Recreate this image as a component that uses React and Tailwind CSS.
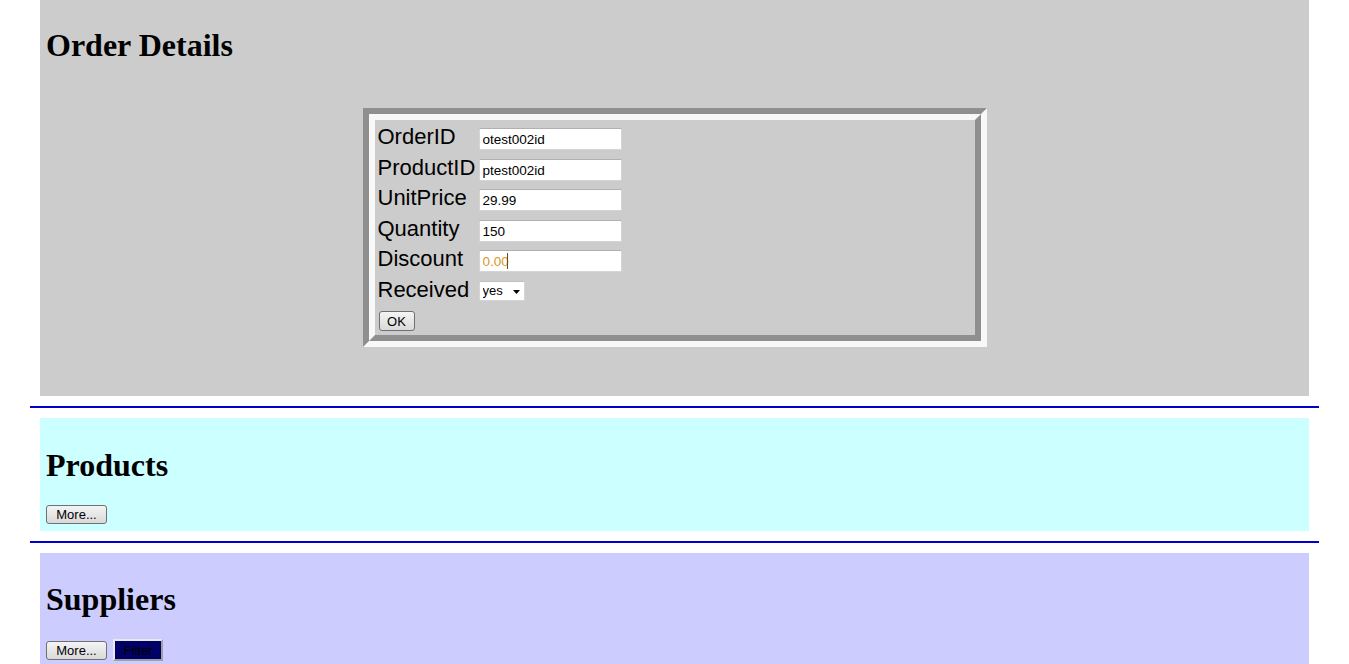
import React from "react";

const heading = "m-0 text-[32px] leading-[37px] font-bold text-black font-['Liberation_Serif',serif]";
const btn =
    "h-[19px] px-[7px] text-[13px] leading-[17px] text-black font-['Liberation_Sans',sans-serif] border border-[#707070] rounded-[3px] bg-gradient-to-b from-[#f4f4f4] to-[#d9d9d9]";
const field =
    "block h-[22px] w-[143px] pl-[3px] text-[13.5px] bg-white font-['Liberation_Sans',sans-serif] border border-[#d4d4d4] border-t-[#b0b0b0] outline-none";

const Row = ({ label, h, children }) => (
    <div className={`flex items-start ${h}`}>
        <label className="w-[101px] text-[22px] leading-[25px] text-black">{label}</label>
        <div className="flex mt-[4px]">{children}</div>
    </div>
);

const App = () => {
    return (
        <div className="min-h-screen bg-white font-['Liberation_Sans',sans-serif]">
            {/* Order details */}
            <div className="mx-[40px] bg-[#cccccc] pl-[6px] pt-[27px] pb-[49px]">
                <h1 className={heading}>Order Details</h1>
                <div className="flex justify-center mt-[44px] pr-[6px]">
                    <div className="w-[624px] border-[6px] border-t-[#8f8f8f] border-l-[#8f8f8f] border-r-[#f8f8f8] border-b-[#f8f8f8]">
                        <div className="border-[6px] border-t-[#f8f8f8] border-l-[#f8f8f8] border-r-[#8f8f8f] border-b-[#8f8f8f] pl-[3px] pt-[4px] pb-[4px]">
                            <Row label="OrderID" h="h-[31px]">
                                <input className={`${field} text-black`} defaultValue="otest002id" />
                            </Row>
                            <Row label="ProductID" h="h-[30px]">
                                <input className={`${field} text-black`} defaultValue="ptest002id" />
                            </Row>
                            <Row label="UnitPrice" h="h-[31px]">
                                <input className={`${field} text-black`} defaultValue="29.99" />
                            </Row>
                            <Row label="Quantity" h="h-[30px]">
                                <input className={`${field} text-black`} defaultValue="150" />
                            </Row>
                            <Row label="Discount" h="h-[31px]">
                                <div className="relative">
                                    <input className={`${field} text-[#d9982a]`} defaultValue="0.00" />
                                    <span className="absolute left-[28px] top-[3px] w-px h-[16px] bg-[#6b4a10]" />
                                </div>
                            </Row>
                            <Row label="Received" h="h-[30px]">
                                <div className="relative w-[46px] h-[20px]">
                                    <select className="block appearance-none w-[46px] h-[20px] pl-[3px] text-[13px] leading-[18px] bg-white border border-[#d4d4d4] border-t-[#c0c0c0] outline-none">
                                        <option>yes</option>
                                        <option>no</option>
                                    </select>
                                    <svg className="absolute left-[34px] top-[9px]" width="7" height="4" viewBox="0 0 7 4">
                                        <path d="M0 0h7L3.5 4z" fill="#000" />
                                    </svg>
                                </div>
                            </Row>
                            <div className="flex h-[24px] pt-[4px] pl-[1px]">
                                <button className={`${btn} h-[20px] w-[36px] px-0 text-[12px]`}>OK</button>
                            </div>
                        </div>
                    </div>
                </div>
            </div>

            <hr className="mx-[30px] mt-[10px] mb-[10px] border-0 h-[2px] bg-[#0000cc]" />

            {/* Products */}
            <div className="mx-[40px] bg-[#ccffff] pl-[6px] pt-[29px] pb-[7px]">
                <h1 className={heading}>Products</h1>
                <div className="mt-[21px] flex">
                    <button className={`${btn} w-[61px]`}>More...</button>
                </div>
            </div>

            <hr className="mx-[30px] mt-[10px] mb-[10px] border-0 h-[2px] bg-[#0000cc]" />

            {/* Suppliers */}
            <div className="mx-[40px] bg-[#ccccff] pl-[6px] pt-[28px] pb-[7px]">
                <h1 className={heading}>Suppliers</h1>
                <div className="mt-[21px] flex items-center gap-[6px]">
                    <button className={`${btn} w-[61px]`}>More...</button>
                    <button className="h-[22px] w-[50px] text-[13px] text-black bg-[#000066] border-2 border-t-[#e8e8f0] border-l-[#e8e8f0] border-r-[#a0a0a0] border-b-[#a0a0a0]">
                        Filter
                    </button>
                </div>
            </div>
        </div>
    );
};

export default App;
